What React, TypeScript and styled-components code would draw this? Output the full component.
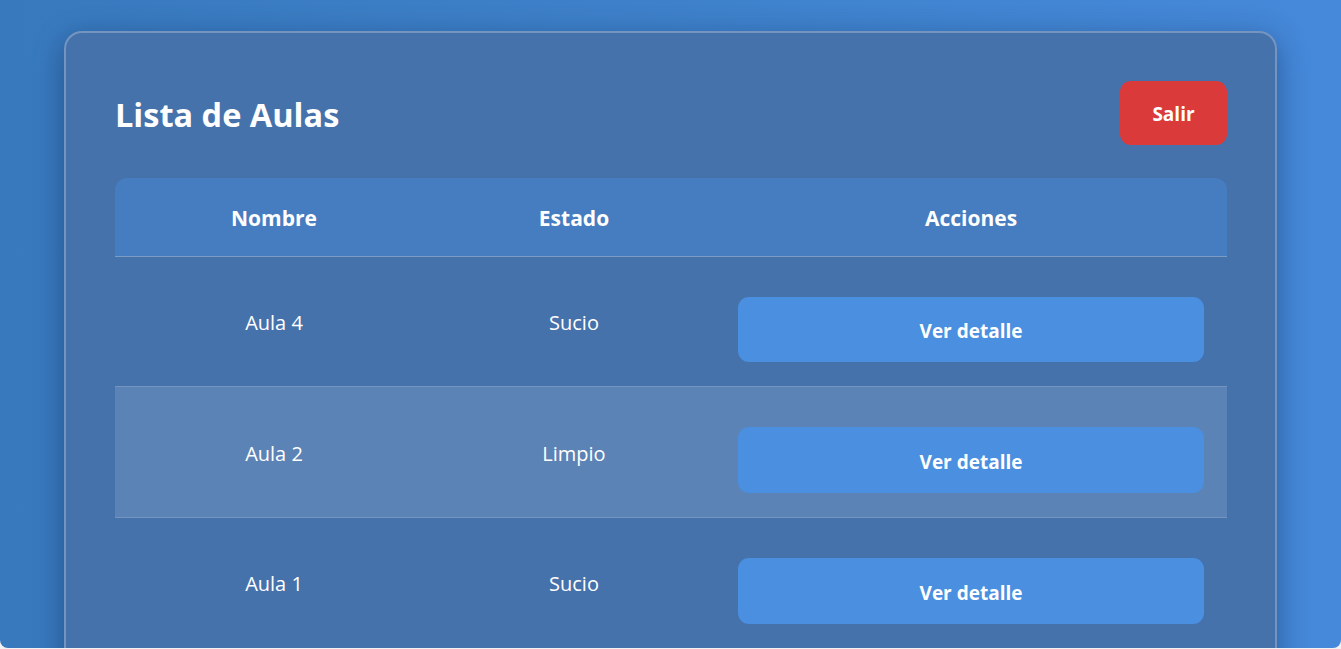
import React from "react";
import styled, { createGlobalStyle } from "styled-components";

const GlobalStyle = createGlobalStyle`
  html, body {
    margin: 0;
    padding: 0;
    background: #f2f2f2;
  }
  * {
    box-sizing: border-box;
  }
`;

const Page = styled.div`
  height: 648px;
  overflow: hidden;
  background: linear-gradient(90deg, #3879bd 0%, #3f82cc 55%, #4689da 100%);
  border-radius: 0 0 8px 8px;
  padding: 31px 64px 0 64px;
  font-family: "Open Sans", "Noto Sans", sans-serif;
`;

const Card = styled.div`
  background: #4672ab;
  border: 2px solid rgba(255, 255, 255, 0.25);
  border-radius: 18px;
  padding: 48px 48px 48px 49px;
  box-shadow: 0 8px 30px rgba(10, 35, 80, 0.45);
  min-height: 700px;
`;

const Header = styled.div`
  display: flex;
  align-items: center;
  justify-content: space-between;
  margin-bottom: 33px;
`;

const Title = styled.h1`
  margin: 0;
  padding-top: 2px;
  color: #ffffff;
  font-size: 32.5px;
  font-weight: 700;
`;

const LogoutButton = styled.button`
  width: 107px;
  height: 64px;
  padding-top: 3px;
  border: none;
  border-radius: 11px;
  background: #da3a3a;
  color: #ffffff;
  font-family: inherit;
  font-size: 19px;
  font-weight: 700;
  cursor: pointer;
`;

const Table = styled.table`
  width: 100%;
  border-collapse: collapse;
  color: #ffffff;
`;

const HeadRow = styled.tr`
  background: #467cc0;
  border-bottom: 1px solid rgba(255, 255, 255, 0.3);
`;

const HeadCell = styled.th<{ $w: number; $first?: boolean; $last?: boolean }>`
  width: ${(p) => p.$w}px;
  height: 78px;
  padding: 2px 0 0;
  text-align: center;
  font-size: 21px;
  font-weight: 700;
  border-top-left-radius: ${(p) => (p.$first ? "12px" : "0")};
  border-top-right-radius: ${(p) => (p.$last ? "12px" : "0")};
`;

const BodyRow = styled.tr<{ $striped?: boolean }>`
  background: ${(p) => (p.$striped ? "rgba(255, 255, 255, 0.12)" : "transparent")};
  border-bottom: 1px solid rgba(255, 255, 255, 0.25);
`;

const Cell = styled.td`
  padding: 26px 23px 24px;
  text-align: center;
  vertical-align: middle;
  font-size: 20px;
  font-weight: 400;
`;

const DetailButton = styled.button`
  display: block;
  width: 100%;
  height: 65.7px;
  margin-top: 14px;
  padding-top: 5px;
  border: none;
  border-radius: 11px;
  background: #4a8fe0;
  color: #ffffff;
  font-family: inherit;
  font-size: 19px;
  font-weight: 700;
  cursor: pointer;
`;

const aulas = [
  { nombre: "Aula 4", estado: "Sucio" },
  { nombre: "Aula 2", estado: "Limpio" },
  { nombre: "Aula 1", estado: "Sucio" },
];

export default function App() {
  return (
    <>
      <GlobalStyle />
      <Page>
        <Card>
          <Header>
            <Title>Lista de Aulas</Title>
            <LogoutButton>Salir</LogoutButton>
          </Header>
          <Table>
            <thead>
              <HeadRow>
                <HeadCell $w={318} $first>
                  Nombre
                </HeadCell>
                <HeadCell $w={282}>Estado</HeadCell>
                <HeadCell $w={512} $last>
                  Acciones
                </HeadCell>
              </HeadRow>
            </thead>
            <tbody>
              {aulas.map((a, i) => (
                <BodyRow key={a.nombre} $striped={i % 2 === 1}>
                  <Cell>{a.nombre}</Cell>
                  <Cell>{a.estado}</Cell>
                  <Cell>
                    <DetailButton>Ver detalle</DetailButton>
                  </Cell>
                </BodyRow>
              ))}
            </tbody>
          </Table>
        </Card>
      </Page>
    </>
  );
}
